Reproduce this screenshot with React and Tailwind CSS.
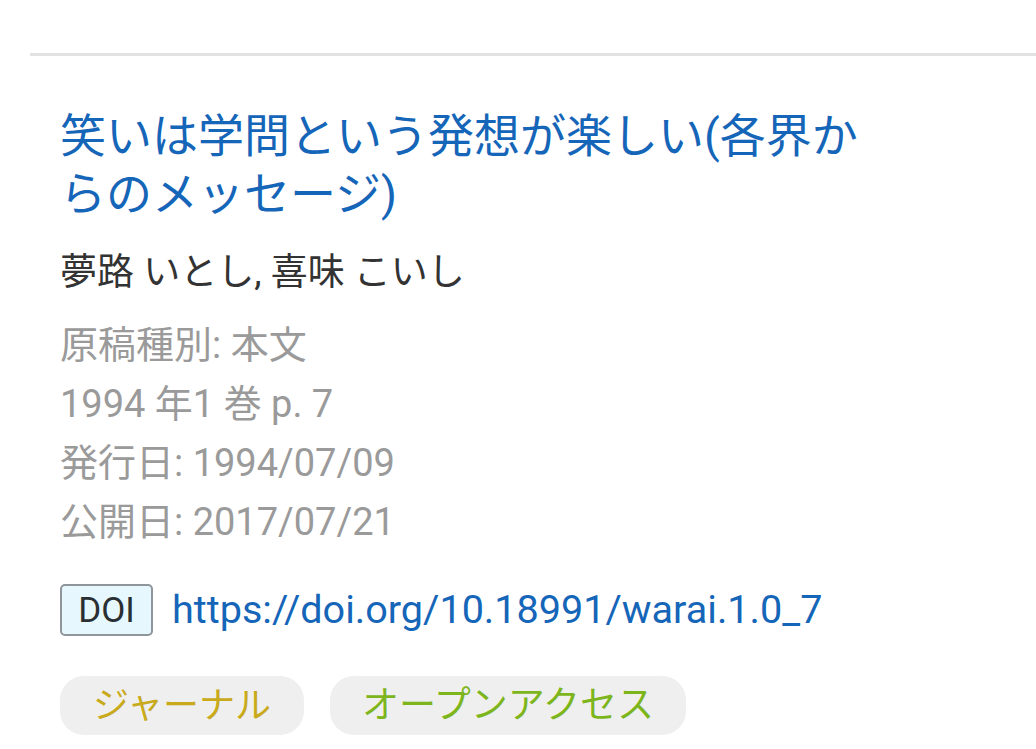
export default function App() {
    const meta = ["原稿種別: 本文", "1994 年1 巻 p. 7", "発行日: 1994/07/09", "公開日: 2017/07/21"];

    return (
        <div
            className="min-h-[749px] w-[1036px] bg-white overflow-hidden"
            style={{ fontFamily: "Roboto, 'Noto Sans CJK JP', sans-serif" }}
        >
            {/* divider */}
            <div className="pt-[53px] pl-[30px]">
                <div className="h-[3px] bg-[#e2e2e2]" />
            </div>

            <div className="pl-[60px] pr-[40px] pt-[51px]">
                {/* title */}
                <h1 className="max-w-[820px] text-[46px] leading-[58px] text-[#1565b8]">
                    笑いは学問という発想が楽しい(各界からのメッセージ)
                </h1>

                {/* authors */}
                <p className="mt-[28px] text-[37px] leading-[44px] text-[#333333]">夢路 いとし, 喜味 こいし</p>

                {/* meta */}
                <div className="mt-[21px] flex flex-col text-[38px] leading-[59px] text-[#9a9a9a]">
                    {meta.map((m) => (
                        <span key={m}>{m}</span>
                    ))}
                </div>

                {/* doi */}
                <div className="mt-[28px] flex items-center gap-[19px]">
                    <span className="flex h-[52px] w-[93px] items-center justify-center rounded-[5px] border-2 border-[#8e969b] bg-[#e6f8fe] pt-[4px] text-[35px] text-[#2a2f33]">
                        DOI
                    </span>
                    <span className="text-[39.6px] text-[#1565b8]">https://doi.org/10.18991/warai.1.0_7</span>
                </div>

                {/* tags */}
                <div className="mt-[37px] flex gap-[26px]">
                    <span className="flex h-[59px] w-[244px] items-center justify-center rounded-[24px] bg-[#efefef] text-[36px] text-[#c8aa1c]">
                        ジャーナル
                    </span>
                    <span className="flex h-[59px] w-[356px] items-center justify-center rounded-[24px] bg-[#efefef] text-[37px] text-[#7db51c]">
                        オープンアクセス
                    </span>
                </div>
            </div>
        </div>
    );
}
